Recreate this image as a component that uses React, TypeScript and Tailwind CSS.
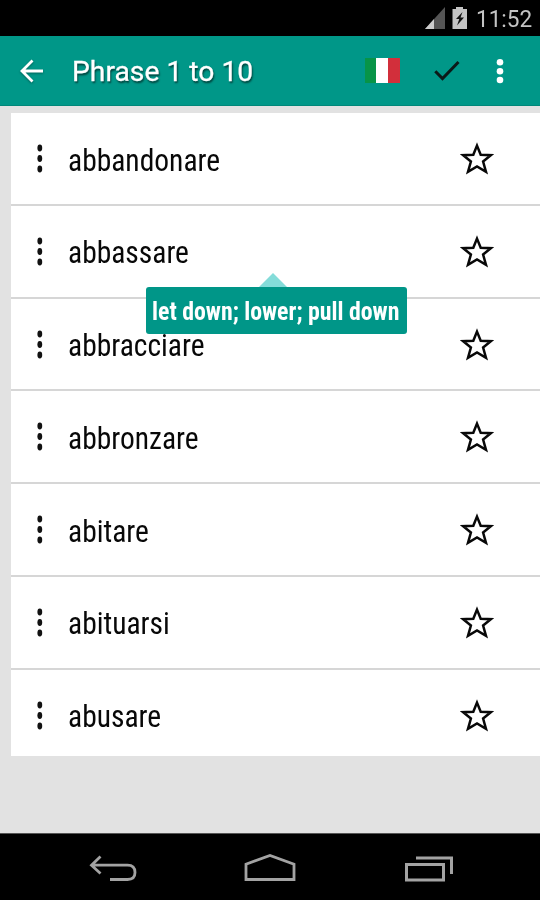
import React from 'react';

interface PhraseRowProps {
  word: string;
  hint?: string;
}

const phrases: PhraseRowProps[] = [
  { word: 'abbandonare' },
  { word: 'abbassare', hint: 'let down; lower; pull down' },
  { word: 'abbracciare' },
  { word: 'abbronzare' },
  { word: 'abitare' },
  { word: 'abituarsi' },
  { word: 'abusare' },
];

const StatusBar: React.FC = () => (
  <div className="h-9 shrink-0 bg-black flex items-center justify-end pr-[7px]">
    <svg width="20" height="22" viewBox="0 0 20 22" className="mr-[7px]">
      <path d="M0 22 L20 0 V22 Z" fill="#555" />
      <path d="M0 22 L9 12 V22 Z" fill="#ccc" />
    </svg>
    <svg width="16" height="24" viewBox="0 0 16 24" className="mr-2">
      <path d="M4 1 H11 V3 H15 V23 H0.5 V3 H4 Z" fill="#c4c4c4" />
      <path d="M10.5 6 L4 13 H7.3 L5 19.5 L12 11.5 H8.5 Z" fill="#111" />
    </svg>
    <span className="pt-0.5 text-[#c4c4c4] text-[24px] leading-9 w-[57px] whitespace-nowrap">
      <span className="inline-block origin-left scale-x-[0.94]">11:52</span>
    </span>
  </div>
);

const AppBar: React.FC = () => (
  <header className="h-[70px] shrink-0 bg-[#009788] border-b border-[#00877a] flex items-center">
    <svg
      width="24"
      height="24"
      viewBox="0 0 24 24"
      className="ml-5 mr-7 drop-shadow-[0_1px_1px_rgba(0,0,0,0.35)]"
      fill="none"
      stroke="#fff"
      strokeWidth="2.8"
    >
      <path d="M23 12 H2 M12.5 1.5 L2 12 L12.5 22.5" />
    </svg>
    <h1 className="flex-1 pt-[3px] text-white text-[28px] [-webkit-text-stroke:0.3px_white] [text-shadow:1px_2px_2px_rgba(0,0,0,0.6)]">
      <span className="inline-block origin-left scale-x-[1.01]">Phrase 1 to 10</span>
    </h1>
    <div className="flex w-[35px] h-[25px] mr-[34px]">
      <span className="w-[11px] bg-[#079447]" />
      <span className="w-3 bg-white" />
      <span className="w-3 bg-[#d22f3b]" />
    </div>
    <svg width="26" height="22" viewBox="0 0 26 22" className="mr-[36px]" fill="none" stroke="#0b1a18" strokeWidth="3">
      <path d="M1.3 11.2 L8.5 18.5 L24.5 2" />
    </svg>
    <svg width="8" height="26" viewBox="0 0 8 26" className="mr-9" fill="#fff">
      <circle cx="4" cy="4.3" r="3.3" />
      <circle cx="4" cy="13.2" r="3.3" />
      <circle cx="4" cy="22" r="3.3" />
    </svg>
  </header>
);

const Hint: React.FC<{ text: string }> = ({ text }) => (
  <div className="absolute left-[134.5px] top-[67px] z-10 flex flex-col items-center w-[261px]">
    <svg width="28" height="14" viewBox="0 0 28 14" className="ml-[-6px]">
      <path d="M0 14 L14 0 L28 14 Z" fill="#84dcd9" />
    </svg>
    <div className="w-full h-[47px] rounded-[3px] bg-[#009688] pl-1.5 text-white text-[26px] leading-[48px] font-bold whitespace-nowrap">
      <span className="inline-block origin-left scale-x-[0.916] font-['Roboto_Condensed',Roboto,sans-serif]">{text}</span>
    </div>
  </div>
);

const PhraseRow: React.FC<PhraseRowProps> = ({ word, hint }) => (
  <li className="relative h-[92.8px] last:h-[86px] border-b-2 border-[#d6d6d6] last:border-b-0 flex items-start">
    <svg width="6" height="30" viewBox="0 0 6 30" className="ml-[26px] mt-[31px]" fill="#111">
      <ellipse cx="2.8" cy="4" rx="2.4" ry="3.4" />
      <ellipse cx="2.8" cy="14.5" rx="2.4" ry="3.4" />
      <ellipse cx="2.8" cy="25" rx="2.4" ry="3.4" />
    </svg>
    <span className="ml-[25px] mt-[25.5px] flex-1 text-[32px] leading-[42px] text-[#080808]">
      <span className="inline-block origin-left scale-x-[0.922] font-['Roboto_Condensed',Roboto,sans-serif]">{word}</span>
    </span>
    <svg width="34" height="33" viewBox="0 0 34 33" className="mr-[46px] mt-[29px]" fill="none" stroke="#080808" strokeWidth="2.5">
      <path d="M17 3.6 L20.7 12.7 L30.8 13.2 L23.1 19.5 L26 29.8 L17 24.4 L8 29.8 L10.9 19.5 L3.2 13.2 L13.3 12.7 Z" />
    </svg>
    {hint && <Hint text={hint} />}
  </li>
);

const NavBar: React.FC = () => (
  <nav className="h-[67px] shrink-0 bg-black border-t border-[#555] flex items-start pt-5 pl-[89px]">
    <svg width="48" height="28" viewBox="0 0 48 28" fill="none" stroke="#a3a3a3" strokeWidth="2.8">
      <path d="M11.5 2.5 L2.5 11.2 L11.5 19.5 M2.5 11.2 H38.5 C44.5 11.2 46 15 46 18.5 S44.5 25.5 38.5 25.5 H21" />
    </svg>
    <svg width="52" height="28" viewBox="0 0 52 28" className="ml-[107px]" fill="none" stroke="#a3a3a3" strokeWidth="2.8">
      <path d="M2 25.5 V10.2 L26 1.5 L50 10.2 V25.5 Z" />
    </svg>
    <svg width="50" height="28" viewBox="0 0 50 28" className="ml-[108px]" fill="none" stroke="#a3a3a3" strokeWidth="3">
      <path d="M2.5 10.5 H39.5 V26 H2.5 Z M12 4 H47.5 V20" />
    </svg>
  </nav>
);

const App: React.FC = () => {
  return (
    <div className="w-[540px] h-[900px] overflow-hidden flex flex-col bg-[#e2e2e2] font-[Roboto,sans-serif]">
      <StatusBar />
      <AppBar />
      <main className="flex-1 pl-[11px] pt-[7px]">
        <ul className="bg-white">
          {phrases.map((phrase) => (
            <PhraseRow key={phrase.word} {...phrase} />
          ))}
        </ul>
      </main>
      <NavBar />
    </div>
  );
};

export default App;
